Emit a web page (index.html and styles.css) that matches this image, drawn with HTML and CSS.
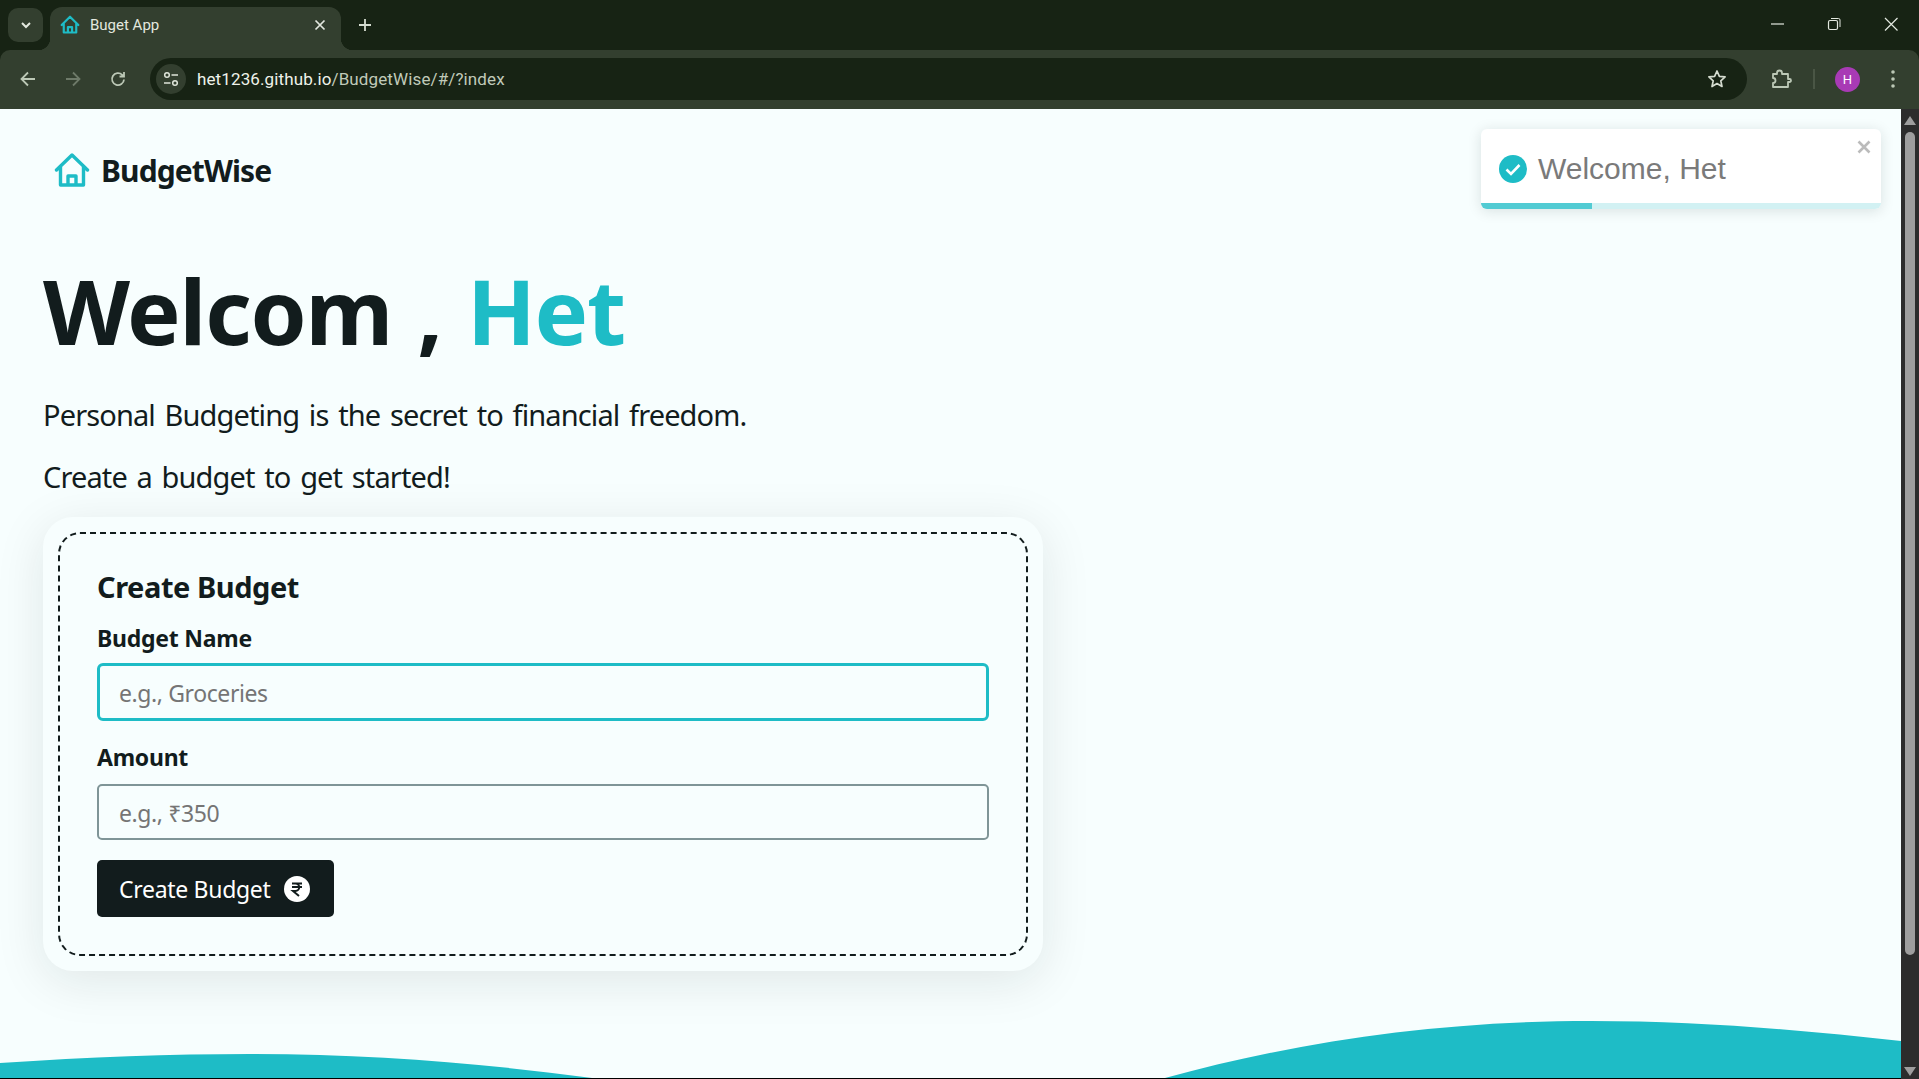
FILE: index.html
```html
<!DOCTYPE html>
<html>
	<head>
		<title>Buget App</title>
		<link rel="stylesheet" href="styles.css">
	</head>
	<body>
		<div class="browser">
			<div class="tabStrip">
				<div class="tabSearch">
					<svg width="14" height="14" viewBox="0 0 14 14"><path d="M3 5l4 4 4-4" fill="none" stroke="#e3e8df" stroke-width="2"/></svg>
				</div>
				<div class="tab">
					<svg class="tabIcon" width="20" height="20" viewBox="0 0 24 24"><path d="M2 12L12 2l10 10M4.500 10v11h15V10M9.500 21v-6.500h5V21" fill="none" stroke="#1ebcc6" stroke-width="2.600" stroke-linecap="round" stroke-linejoin="round"/></svg>
					<span class="tabTitle">Buget App</span>
					<svg width="14" height="14" viewBox="0 0 14 14"><path d="M2.500 2.500l9 9M11.500 2.500l-9 9" stroke="#e3e8df" stroke-width="1.700"/></svg>
				</div>
				<svg class="newTab" width="16" height="16" viewBox="0 0 16 16"><path d="M8 2v12M2 8h12" stroke="#d5dcd0" stroke-width="1.800"/></svg>
				<div class="windowControls">
					<svg width="16" height="16" viewBox="0 0 16 16"><path d="M2 8h13" stroke="#e3e8df" stroke-width="1.200"/></svg>
					<svg width="16" height="16" viewBox="0 0 16 16"><rect x="2.500" y="4.500" width="9" height="9" rx="1.500" fill="none" stroke="#e3e8df" stroke-width="1.200"/><path d="M5 2.500h7.500a1.500 1.500 0 0 1 1.500 1.500v7" fill="none" stroke="#e3e8df" stroke-width="1"/></svg>
					<svg width="16" height="16" viewBox="0 0 16 16"><path d="M2 2l12.500 12.500M14.500 2L2 14.500" stroke="#e3e8df" stroke-width="1.200"/></svg>
				</div>
			</div>
			<div class="toolbar">
				<svg class="navBtn" width="20" height="20" viewBox="0 0 20 20"><path d="M17 10H4M10 3.500L3.500 10l6.500 6.500" fill="none" stroke="#bcc8b6" stroke-width="1.800"/></svg>
				<svg class="navBtn" width="20" height="20" viewBox="0 0 20 20"><path d="M3 10h13M10 3.500l6.500 6.500-6.500 6.500" fill="none" stroke="#6e7a69" stroke-width="1.800"/></svg>
				<svg class="navBtn" width="20" height="20" viewBox="0 0 20 20"><path d="M16 10.500a6 6 0 1 1-1.800-4.700L16 7.500M16 3v4.500h-4.500" fill="none" stroke="#bcc8b6" stroke-width="1.800"/></svg>
				<div class="omnibox">
					<div class="siteInfo">
						<svg width="18" height="18" viewBox="0 0 18 18"><circle cx="5" cy="5" r="2.300" fill="none" stroke="#dfe5da" stroke-width="1.500"/><path d="M9.500 5H16M2 13h6.500" stroke="#dfe5da" stroke-width="1.500"/><circle cx="13" cy="13" r="2.300" fill="none" stroke="#dfe5da" stroke-width="1.500"/></svg>
					</div>
					<span class="urlHost">het1236.github.io</span><span class="urlPath">/BudgetWise/#/?index</span>
					<svg class="star" width="20" height="20" viewBox="0 0 20 20"><path d="M10 2l2.400 5.300 5.700.6-4.300 3.900 1.200 5.700L10 14.600l-5 2.900 1.200-5.700L1.900 7.900l5.700-.6z" fill="none" stroke="#d5dcd0" stroke-width="1.700" stroke-linejoin="round"/></svg>
				</div>
				<svg class="extensions" width="22" height="22" viewBox="0 0 22 22"><path d="M3 6h4V5a2.500 2.500 0 0 1 5 0v1h6v5h1.500a1.500 1.500 0 0 1 0 3H18v5H3v-4a2.500 2.500 0 0 0 0-5z" fill="none" stroke="#bcc8b6" stroke-width="1.800" stroke-linejoin="round"/></svg>
				<div class="divider"></div>
				<div class="avatar">H</div>
				<svg class="kebab" width="6" height="20" viewBox="0 0 6 20"><circle cx="3" cy="3" r="1.800" fill="#bcc8b6"/><circle cx="3" cy="10" r="1.800" fill="#bcc8b6"/><circle cx="3" cy="17" r="1.800" fill="#bcc8b6"/></svg>
			</div>
		</div>

		<div class="viewport">
			<div class="page">
				<nav class="navbar">
					<svg width="36" height="34" viewBox="0 0 36 34"><path d="M2.500 17L18 2l15.500 15M6.500 13.500V32h23V13.500M14 32v-9h8v9" fill="none" stroke="#1ebcc6" stroke-width="3.400" stroke-linecap="round" stroke-linejoin="round"/></svg>
					<span class="brand">BudgetWise</span>
				</nav>
				<main class="intro">
					<h1 class="welcome">Welcom , <span class="accent">Het</span></h1>
					<p class="lead">Personal Budgeting is the secret to financial freedom.</p>
					<p class="lead">Create a budget to get started!</p>
					<div class="card">
						<form class="cardInner">
							<h2 class="cardTitle">Create Budget</h2>
							<label class="fieldLabel" for="budgetName">Budget Name</label>
							<input class="field fieldFocused" id="budgetName" type="text" placeholder="e.g., Groceries">
							<label class="fieldLabel fieldLabelGap" for="amount">Amount</label>
							<input class="field" id="amount" type="text" placeholder="e.g., ₹350">
							<button class="createBtn" type="button">
								<span>Create Budget</span>
								<svg width="26" height="26" viewBox="0 0 26 26"><circle cx="13" cy="13" r="13" fill="#fff"/><path d="M8 7.500h10M8 11h10M9 7.500h2.500a3.700 3.700 0 0 1 0 7.400H9l6 5" fill="none" stroke="#121c1d" stroke-width="2"/></svg>
							</button>
						</form>
					</div>
				</main>
				<svg class="wave" width="1901" height="58" viewBox="0 0 1901 58"><path d="M0 42C90 36 170 33 250 33c120 0 230 9 342 24H1165C1300 20 1440 0 1591 0c110 0 210 9 310 20v37H0z" fill="#1ebcc6"/></svg>
				<div class="bottomLine"></div>

				<div class="toast">
					<div class="toastBody">
						<svg width="28" height="28" viewBox="0 0 28 28"><circle cx="14" cy="14" r="14" fill="#1ebcc6"/><path d="M7.500 14.500l4.500 4.500 8.500-9" fill="none" stroke="#fff" stroke-width="2.600"/></svg>
						<span class="toastText">Welcome, Het</span>
						<svg class="toastClose" width="14" height="14" viewBox="0 0 14 14"><path d="M1.500 1.500l11 11M12.500 1.500l-11 11" stroke="#bbb" stroke-width="2.600"/></svg>
					</div>
					<div class="toastTrack"><div class="toastProgress"></div></div>
				</div>
			</div>
			<div class="scrollbar">
				<div class="arrowUp"></div>
				<div class="thumb"></div>
				<div class="arrowDown"></div>
			</div>
		</div>
	</body>
</html>
```

FILE: styles.css
```css
:root {
	--frame: #172314;
	--toolbar: #333f2f;
	--teal: #1ebcc6;
	--ink: #121c1d;
	--pageBackground: #f7fefe;
}
* {box-sizing: border-box;}
html, body {margin: 0; height: 100%; overflow: hidden;}
body {display: flex; flex-direction: column; font-family: "Noto Sans", sans-serif; color: var(--ink); background: var(--pageBackground);}

/* browser frame */
.browser {height: 109px; flex: none; background: var(--frame); font-family: Roboto, sans-serif;}
.tabStrip {height: 50px; display: flex; align-items: flex-start; padding: 8px 0 0 8px;}
.tabSearch {width: 35px; height: 34px; border-radius: 10px; background: var(--toolbar); display: flex; align-items: center; justify-content: center;}
.tab {position: relative; width: 291px; height: 43px; margin: -1px 0 0 7px; padding: 0 14px 8px 10px; background: var(--toolbar); border-radius: 12px 12px 0 0; display: flex; align-items: center; color: #e3e8df;}
.tab::before, .tab::after {content: ""; position: absolute; bottom: 0; width: 12px; height: 12px;}
.tab::before {left: -12px; background: radial-gradient(circle at 0 0, transparent 12px, var(--toolbar) 12.5px);}
.tab::after {right: -12px; background: radial-gradient(circle at 100% 0, transparent 12px, var(--toolbar) 12.5px);}
.tabIcon {flex: none;}
.tabTitle {flex: 1; margin-left: 10px; font-size: 15px;}
.newTab {margin: 9px 0 0 16px;}
.windowControls {margin: 8px 20px 0 auto; display: flex; gap: 41px;}
.toolbar {height: 59px; background: var(--toolbar); border-radius: 10px 10px 0 0; display: flex; align-items: center; padding: 0 20px 1px 18px;}
.navBtn {margin-right: 25px; flex: none;}
.navBtn:nth-child(3) {margin-right: 22px;}
.omnibox {width: 1597px; height: 42px; border-radius: 21px; background: var(--frame); display: flex; align-items: center; padding: 0 20px 0 6px; font-size: 17px; letter-spacing: 0.12px;}
.siteInfo {width: 30px; height: 30px; border-radius: 50%; background: var(--toolbar); display: flex; align-items: center; justify-content: center; margin-right: 11px;}
.urlHost {color: #eef2ea;}
.urlPath {color: #c0cab9;}
.star {margin-left: auto;}
.extensions {margin-left: 23px; flex: none;}
.divider {width: 2px; height: 20px; margin-left: 21px; background: #4a5645;}
.avatar {width: 25px; height: 25px; margin-left: 20px; border-radius: 50%; background: #a83ab5; color: #fff; font-size: 13px; display: flex; align-items: center; justify-content: center;}
.kebab {margin-left: 30px; flex: none;}

/* page */
.viewport {flex: 1; display: flex; min-height: 0;}
.page {position: relative; flex: 1; display: flex; flex-direction: column; overflow: hidden; background: var(--pageBackground);}
.navbar {display: flex; align-items: center; gap: 11px; padding: 44px 0 0 54px; height: 78px;}
.brand {font-size: 30px; font-weight: 700; letter-spacing: -0.9px;}
.intro {padding: 0 0 0 43px;}
.welcome {margin: 69px 0 0; font-size: 90px; line-height: 108px; font-weight: 700; letter-spacing: -1.2px; word-spacing: 3px;}
.accent {color: var(--teal);}
.lead {margin: 0; font-size: 29px; line-height: 45px; letter-spacing: -0.88px; word-spacing: 3px;}
.welcome + .lead {margin-top: 28px;}
.lead + .lead {margin-top: 17px;}
.card {width: 1000px; height: 454px; margin-top: 18px; padding: 15px; border-radius: 30px; background: var(--pageBackground); box-shadow: 0 10px 50px rgba(18, 28, 29, 0.1);}
.cardInner {height: 100%; padding: 31px 37px 0; border: 2px dashed var(--ink); border-radius: 22px; display: flex; flex-direction: column; align-items: flex-start;}
.cardTitle {margin: 0; font-size: 29px; line-height: 44px; font-weight: 700; letter-spacing: -0.45px;}
.fieldLabel {margin-top: 11px; font-size: 23px; line-height: 36px; font-weight: 700; letter-spacing: -0.25px;}
.fieldLabelGap {margin-top: 18px;}
.field {width: 892px; height: 56px; margin-top: 7px; padding: 2px 20px 0; border: 2px solid #7f9597; border-radius: 5px; background: transparent; font-family: "Noto Sans", sans-serif; font-size: 23px; letter-spacing: -0.4px; color: var(--ink); outline: none;}
.field::placeholder {color: #757575;}
.fieldFocused {height: 58px; padding: 2px 19px 0; border: 3px solid var(--teal); border-radius: 6px;}
.fieldLabelGap + .field {margin-top: 9px;}
.createBtn {height: 57px; margin-top: 20px; padding: 0 24px 0 22px; border: 0; border-radius: 5px; background: var(--ink); color: #fff; font-family: "Noto Sans", sans-serif; font-size: 23px; letter-spacing: -0.3px; display: flex; align-items: center; gap: 13px;}
.wave {display: block; position: absolute; left: 0; bottom: 0;}
.bottomLine {position: absolute; left: 0; right: 0; bottom: 0; height: 1px; background: #000;}

/* toast */
.toast {position: absolute; top: 20px; left: 1481px; width: 400px; height: 80px; border-radius: 6px; overflow: hidden; background: #fff; box-shadow: 0 2px 14px rgba(18, 28, 29, 0.13); display: flex; flex-direction: column;}
.toastBody {position: relative; flex: 1; display: flex; align-items: center; padding: 6px 0 0 18px; gap: 11px;}
.toastText {font-family: "Liberation Sans", sans-serif; font-size: 30px; color: #7a7a7a;}
.toastClose {position: absolute; top: 11px; right: 10px;}
.toastTrack {height: 6px; background: #d2f1f3;}
.toastProgress {width: 111px; height: 100%; background: #52cbd3;}

/* scrollbar */
.scrollbar {width: 18px; flex: none; background: #2c2c2c; display: flex; flex-direction: column; align-items: center; padding: 7px 0 3px;}
.arrowUp {width: 0; height: 0; border: 6px solid transparent; border-top: 0; border-bottom: 9px solid #9e9e9e; flex: none;}
.thumb {width: 10px; height: 823px; margin-top: 7px; border-radius: 5px; background: #9e9e9e;}
.arrowDown {width: 0; height: 0; border: 6px solid transparent; border-bottom: 0; border-top: 9px solid #9e9e9e; margin-top: auto;}
```
